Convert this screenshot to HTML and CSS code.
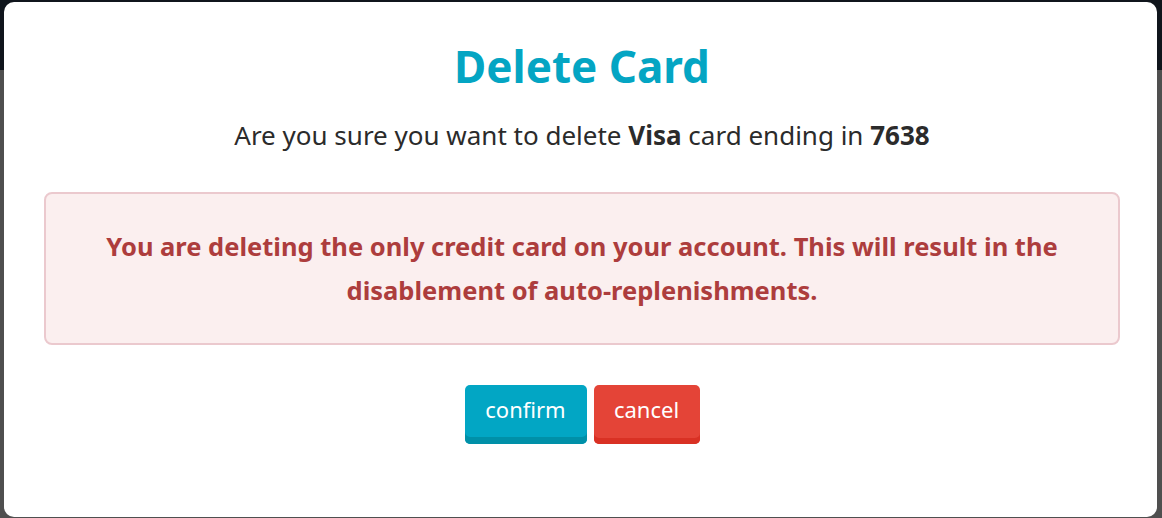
FILE: index.html
```html
<!DOCTYPE html>
<html>
<head>
<meta charset="utf-8">
<link rel="stylesheet" href="styles.css">
</head>
<body>
<div class="modal">
  <h1 class="title">Delete Card</h1>
  <p class="question">Are you sure you want to delete <b>Visa</b> card ending in <b>7638</b></p>
  <div class="alert">You are deleting the only credit card on your account. This will result in the disablement of auto-replenishments.</div>
  <div class="actions">
    <button class="btn btn-confirm">confirm</button>
    <button class="btn btn-cancel">cancel</button>
  </div>
</div>
</body>
</html>
```
FILE: styles.css
```css
html, body {
  margin: 0;
  height: 100%;
}
body {
  background: linear-gradient(#10151c 0, #10151c 70px, #4f4f4f 70px);
  padding: 2px 5px 1px 4px;
  box-sizing: border-box;
  font-family: "Noto Sans", "Open Sans", sans-serif;
}
.modal {
  background: #fff;
  border-radius: 10px;
  height: 515px;
  box-sizing: border-box;
  padding: 36px 37px 0 40px;
  text-align: center;
}
.title {
  margin: 0;
  font-size: 44px;
  line-height: 56px;
  font-weight: 700;
  color: #04a5c3;
}
.question {
  margin: 26px 0 0;
  font-size: 26px;
  line-height: 30px;
  color: #2b2b2b;
}
.question b {
  font-weight: 700;
}
.alert {
  margin-top: 42px;
  background: #fbefef;
  border: 2px solid #ebc9ce;
  border-radius: 8px;
  padding: 30px 40px 31px;
  font-size: 25.5px;
  line-height: 44px;
  font-weight: 700;
  color: #ad3d3d;
}
.actions {
  margin-top: 40px;
  display: flex;
  justify-content: center;
  gap: 7px;
}
.btn {
  font-family: inherit;
  font-size: 22px;
  color: #fff;
  border: 0;
  border-radius: 5px;
  height: 59px;
  padding: 0 10px 11px;
}
.btn-confirm {
  background: #02a6c4;
  box-shadow: inset 0 -7px 0 #0090a8;
  width: 122px;
}
.btn-cancel {
  background: #e44437;
  box-shadow: inset 0 -6px 0 #d93124;
  width: 106px;
}
```
